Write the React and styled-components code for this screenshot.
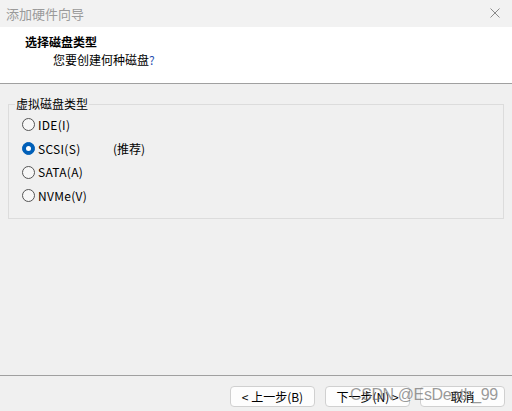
import React, { useState } from "react"
import styled, { createGlobalStyle } from "styled-components"

const FONT = `"Noto Sans CJK SC", "Noto Sans", sans-serif`

const GlobalStyle = createGlobalStyle`
  html, body {
    margin: 0;
    padding: 0;
    background: #f0f0f0;
  }
  #root {
    width: 512px;
    height: 411px;
  }
`

const Window = styled.div`
  position: relative;
  width: 512px;
  height: 411px;
  display: flex;
  flex-direction: column;
  background: #f0f0f0;
  font-family: ${FONT};
`

const TitleBar = styled.div`
  height: 27px;
  flex: none;
  display: flex;
  align-items: center;
  justify-content: space-between;
  padding: 0 8px 0 6px;
  background: #f2f2f2;
  color: #9a9a9a;
  font-size: 13px;
`

const CloseIcon = styled.svg`
  width: 10px;
  height: 10px;
  margin-top: -2px;
  margin-right: 4px;
`

const Header = styled.div`
  flex: none;
  background: #ffffff;
  border-bottom: 1px solid #a0a0a0;
  padding: 6px 0 0 25px;
  box-sizing: border-box;
  height: 57px;
`

const HeaderTitle = styled.div`
  font-size: 12px;
  font-weight: bold;
  color: #000;
  line-height: 17px;
`

const HeaderSub = styled.div`
  font-size: 12px;
  color: #000;
  line-height: 17px;
  margin-left: 28px;
  margin-top: 1px;
`

const Question = styled.span`
  color: #2a4fb0;
`

const Body = styled.div`
  flex: 1;
  padding: 13px 8px 0 8px;
`

const GroupBox = styled.fieldset`
  margin: 0;
  height: 122px;
  box-sizing: border-box;
  border: 1px solid #dcdcdc;
  padding: 2px 0 0 13px;
  display: flex;
  flex-direction: column;
`

const Legend = styled.legend`
  font-size: 12px;
  color: #000;
  padding: 0 1px;
  margin-left: -7px;
  line-height: 14px;
`

const RadioRow = styled.label`
  display: flex;
  align-items: center;
  height: 23.7px;
  font-size: 12px;
  color: #000;
  cursor: default;
`

const RadioCircle = styled.span`
  width: 13px;
  height: 13px;
  border-radius: 50%;
  box-sizing: border-box;
  flex: none;
  margin-right: 3px;
  display: flex;
  align-items: center;
  justify-content: center;
  border: 1px solid ${props => (props.checked ? "#005fb8" : "#555")};
  background: ${props => (props.checked ? "#005fb8" : "#f7f7f7")};

  &::after {
    content: "";
    width: 5px;
    height: 5px;
    border-radius: 50%;
    background: #fff;
    display: ${props => (props.checked ? "block" : "none")};
  }
`

const RadioText = styled.span`
  width: ${props => (props.wide ? "75px" : "auto")};
  line-height: 16px;
  letter-spacing: 0.3px;
`

const Footer = styled.div`
  height: 36px;
  flex: none;
  border-top: 1px solid #a0a0a0;
  display: flex;
  justify-content: flex-end;
  align-items: flex-start;
  padding: 10px 7px 0 0;
  gap: 10px;
  box-sizing: border-box;
`

const Button = styled.button`
  width: 85px;
  height: 21px;
  font-family: ${FONT};
  font-size: 12px;
  color: #000;
  background: #fdfdfd;
  border: 1px solid #d0d0d0;
  border-radius: 4px;
  padding: 0;
  line-height: 18px;
`

const Watermark = styled.div`
  position: absolute;
  z-index: 5;
  left: 350px;
  top: 385px;
  font-family: "Liberation Sans", Arial, sans-serif;
  font-size: 16px;
  line-height: 20px;
  letter-spacing: -0.4px;
  color: rgba(110, 110, 110, 0.7);
  pointer-events: none;
  white-space: nowrap;
`

const options = [
  { key: "ide", label: "IDE(I)" },
  { key: "scsi", label: "SCSI(S)", note: "(推荐)" },
  { key: "sata", label: "SATA(A)" },
  { key: "nvme", label: "NVMe(V)" },
]

const App = () => {
  const [selected, setSelected] = useState("scsi")

  return (
    <Window>
      <GlobalStyle />
      <TitleBar>
        <span>添加硬件向导</span>
        <CloseIcon viewBox="0 0 10 10">
          <path d="M0.5 0.5 L9.5 9.5 M9.5 0.5 L0.5 9.5" stroke="#8a8a8a" strokeWidth="1" />
        </CloseIcon>
      </TitleBar>
      <Header>
        <HeaderTitle>选择磁盘类型</HeaderTitle>
        <HeaderSub>
          您要创建何种磁盘<Question>?</Question>
        </HeaderSub>
      </Header>
      <Body>
        <GroupBox>
          <Legend>虚拟磁盘类型</Legend>
          {options.map(opt => (
            <RadioRow key={opt.key} onClick={() => setSelected(opt.key)}>
              <RadioCircle checked={selected === opt.key} />
              <RadioText wide={!!opt.note}>{opt.label}</RadioText>
              {opt.note && <span>{opt.note}</span>}
            </RadioRow>
          ))}
        </GroupBox>
      </Body>
      <Footer>
        <Button>&lt; 上一步(B)</Button>
        <Button>下一步(N) &gt;</Button>
        <Button>取消</Button>
      </Footer>
      <Watermark>CSDN @EsDeath_99</Watermark>
    </Window>
  )
}

export default App
